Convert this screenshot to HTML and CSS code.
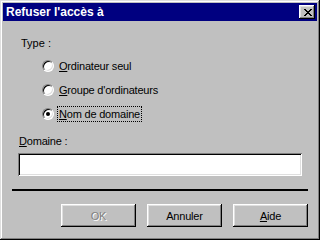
FILE: index.html
```html
<!DOCTYPE html>
<html lang="fr">
<head>
    <meta charset="UTF-8">
    <title>Refuser l'accès à</title>
    <link rel="stylesheet" href="styles.css">
</head>
<body>

    <div class="window">
        <div class="titlebar">
            <span class="title">Refuser l'accès à</span>
            <button class="close" type="button">
                <svg width="8" height="7" viewBox="0 0 8 7" shape-rendering="crispEdges">
                    <path d="M0 0h2v1h-2z M6 0h2v1h-2z M1 1h2v1h-2z M5 1h2v1h-2z M2 2h4v1h-4z M3 3h2v1h-2z M2 4h4v1h-4z M1 5h2v1h-2z M5 5h2v1h-2z M0 6h2v1h-2z M6 6h2v1h-2z" fill="#000"/>
                </svg>
            </button>
        </div>

        <div class="content">
            <div class="type-label">Type :</div>

            <div class="options">
                <label class="option">
                    <span class="radio"></span>
                    <span class="option-text"><u>O</u>rdinateur seul</span>
                </label>
                <label class="option">
                    <span class="radio"></span>
                    <span class="option-text"><u>G</u>roupe d'ordinateurs</span>
                </label>
                <label class="option">
                    <span class="radio"><span class="dot"></span></span>
                    <span class="option-text focused"><u>N</u>om de domaine</span>
                </label>
            </div>

            <div class="domain-label"><u>D</u>omaine :</div>
            <input class="domain-input" type="text">

            <div class="separator"></div>

            <div class="buttons">
                <button class="btn disabled" type="button">OK</button>
                <button class="btn" type="button">Annuler</button>
                <button class="btn" type="button"><u>A</u>ide</button>
            </div>
        </div>
    </div>

</body>
</html>
```

FILE: styles.css
```css
* {
    margin: 0;
    padding: 0;
    box-sizing: border-box;
}

body {
    width: 320px;
    height: 240px;
    overflow: hidden;
    font-family: 'Liberation Sans', Arial, sans-serif;
    font-size: 11px;
    color: #000;
    background: #c0c0c0;
}

.window {
    width: 320px;
    height: 240px;
    padding: 3px;
    background: #c0c0c0;
    box-shadow:
        inset -1px -1px 0 #000,
        inset 1px 1px 0 #dfdfdf,
        inset -2px -2px 0 #808080,
        inset 2px 2px 0 #fff;
    display: flex;
    flex-direction: column;
}

.titlebar {
    height: 18px;
    background: #000080;
    display: flex;
    align-items: center;
    justify-content: space-between;
    padding: 0 2px 0 3px;
}

.title {
    color: #fff;
    font-weight: bold;
    font-size: 12px;
    line-height: 18px;
}

.close {
    width: 16px;
    height: 14px;
    border: none;
    background: #c0c0c0;
    display: flex;
    align-items: center;
    justify-content: center;
    padding-left: 1px;
    box-shadow:
        inset -1px -1px 0 #000,
        inset 1px 1px 0 #fff,
        inset -2px -2px 0 #808080,
        inset 2px 2px 0 #dfdfdf;
}

.close svg {
    display: block;
}

.content {
    display: flex;
    flex-direction: column;
}

.type-label {
    margin: 16px 0 0 18px;
    line-height: 13px;
}

.options {
    margin: 4px 0 0 39px;
    display: flex;
    flex-direction: column;
}

.option {
    height: 24px;
    display: flex;
    align-items: center;
    gap: 3px;
}

.radio {
    width: 12px;
    height: 12px;
    border-radius: 50%;
    border: 1px solid;
    border-color: #808080 #fff #fff #808080;
    display: flex;
    align-items: center;
    justify-content: center;
}

.radio::before {
    content: "";
}

.radio {
    background: #fff;
    box-shadow: inset 1px 1px 0 #000, inset -1px -1px 0 #dfdfdf;
}

.dot {
    width: 4px;
    height: 4px;
    border-radius: 50%;
    background: #000;
}

.option-text {
    line-height: 14px;
    padding: 0 1px;
    border: 1px solid transparent;
    letter-spacing: -0.2px;
}

.option-text.focused {
    border: 1px dotted #000;
}

u {
    text-underline-offset: 1px;
}

.domain-label {
    margin: 9px 0 0 16px;
    line-height: 13px;
    letter-spacing: -0.2px;
}

.domain-input {
    margin: 5px 0 0 15px;
    width: 284px;
    height: 23px;
    border: none;
    outline: none;
    background: #fff;
    box-shadow:
        inset 1px 1px 0 #808080,
        inset -1px -1px 0 #fff,
        inset 2px 2px 0 #000,
        inset -2px -2px 0 #dfdfdf;
}

.separator {
    margin: 13px 9px 0 9px;
    height: 2px;
    background: #000;
}

.buttons {
    margin-top: 13px;
    padding-right: 9px;
    display: flex;
    justify-content: flex-end;
    gap: 11px;
}

.btn {
    width: 75px;
    height: 23px;
    border: none;
    background: #c0c0c0;
    font-family: 'Liberation Sans', Arial, sans-serif;
    font-size: 11px;
    color: #000;
    letter-spacing: -0.2px;
    box-shadow:
        inset -1px -1px 0 #000,
        inset 1px 1px 0 #fff,
        inset -2px -2px 0 #808080,
        inset 2px 2px 0 #dfdfdf;
}

.btn.disabled {
    color: #808080;
    text-shadow: 1px 1px 0 #fff;
}
```
